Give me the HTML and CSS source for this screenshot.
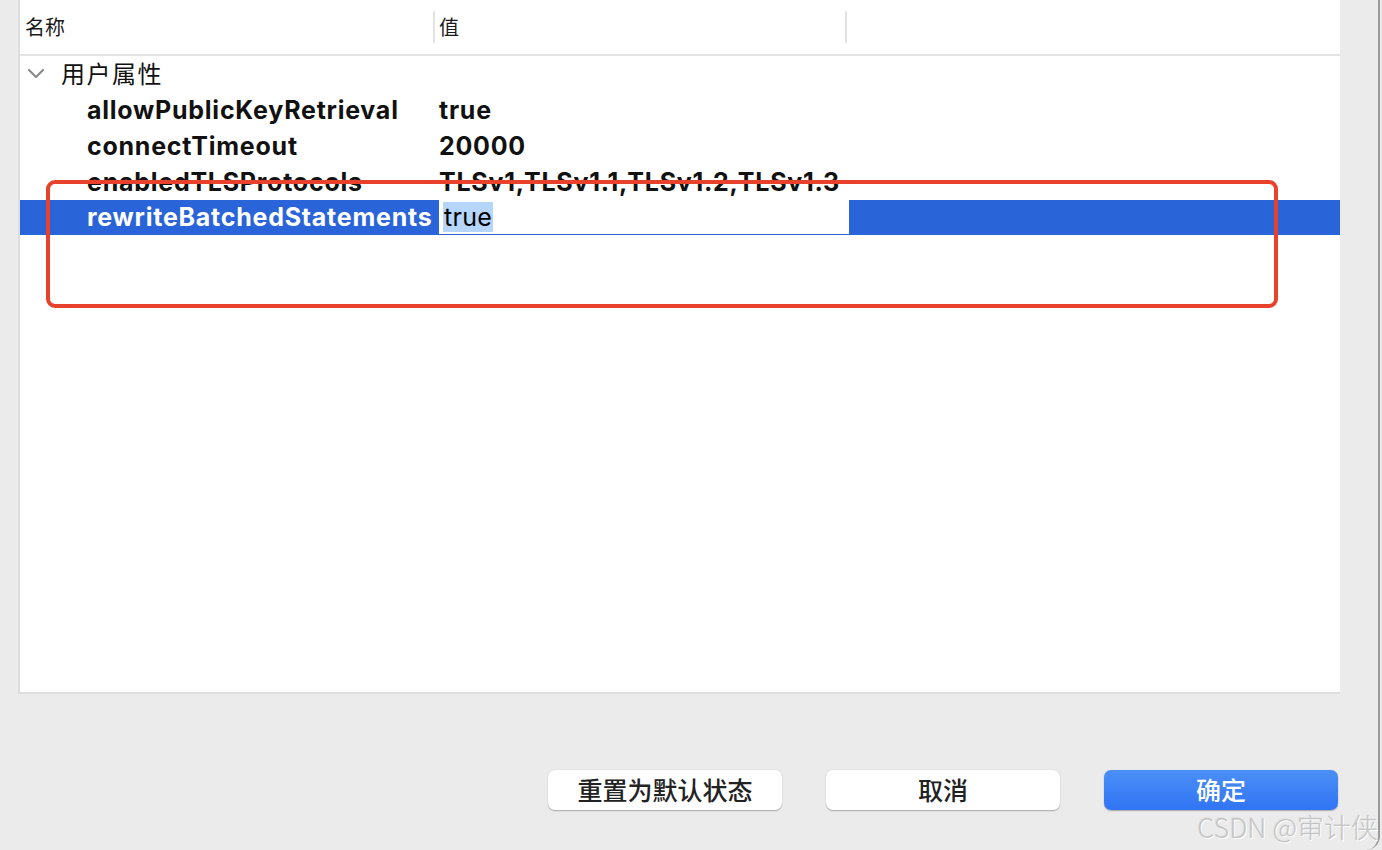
FILE: index.html
```html
<!DOCTYPE html>
<html lang="zh-CN">
<head>
<meta charset="utf-8">
<title>属性</title>
<link rel="stylesheet" href="styles.css">
</head>
<body>
<div class="window">
  <div class="panel">
    <div class="header">
      <div class="hcell name-col">名称</div>
      <div class="hcell value-col">值</div>
      <div class="hcell rest-col"></div>
    </div>
    <div class="rows">
      <div class="row group">
        <svg class="chev" width="18" height="12" viewBox="0 0 18 12"><path d="M2 2 L9 9 L16 2" fill="none" stroke="#8a8a8a" stroke-width="2.2" stroke-linecap="round" stroke-linejoin="round"/></svg>
        <span class="group-label">用户属性</span>
      </div>
      <div class="row prop">
        <div class="pname">allowPublicKeyRetrieval</div>
        <div class="pvalue">true</div>
      </div>
      <div class="row prop">
        <div class="pname">connectTimeout</div>
        <div class="pvalue">20000</div>
      </div>
      <div class="row prop">
        <div class="pname">enabledTLSProtocols</div>
        <div class="pvalue">TLSv1,TLSv1.1,TLSv1.2,TLSv1.3</div>
      </div>
      <div class="row prop selected">
        <div class="pname">rewriteBatchedStatements</div>
        <div class="editor"><span class="sel">true</span></div>
      </div>
    </div>
    <div class="highlight-box"></div>
  </div>
  <div class="footer">
    <button class="btn">重置为默认状态</button>
    <button class="btn">取消</button>
    <button class="btn primary">确定</button>
  </div>
  <div class="watermark">CSDN @审计侠</div>
</div>
</body>
</html>
```

FILE: styles.css
```css
html, body {
  margin: 0;
  padding: 0;
  background: #ebebeb;
}
body {
  width: 1382px;
  height: 850px;
  overflow: hidden;
  font-family: "Inter", "Liberation Sans", "Noto Sans CJK SC", sans-serif;
  color: #111;
}
.window {
  position: relative;
  width: 1380px;
  height: 850px;
  border-right: 2px solid #9a9a9a;
  border-bottom-right-radius: 14px;
  box-sizing: border-box;
  display: flex;
  flex-direction: column;
}
.panel {
  position: relative;
  margin-left: 18px;
  width: 1322px;
  height: 694px;
  box-sizing: border-box;
  background: #fff;
  border-left: 2px solid #dedede;
  border-bottom: 2px solid #dedede;
}
.header {
  display: flex;
  height: 54px;
  border-bottom: 2px solid #e3e3e3;
  align-items: center;
}
.hcell {
  font-family: "Noto Sans CJK SC", sans-serif;
  font-size: 20px;
  color: #1a1a1a;
  height: 32px;
  line-height: 32px;
  box-sizing: border-box;
}
.name-col {
  width: 415px;
  padding-left: 5px;
  border-right: 2px solid #e3e3e3;
}
.value-col {
  width: 412px;
  padding-left: 4px;
  border-right: 2px solid #e3e3e3;
}
.rest-col {
  flex: 1;
}
.rows {
  display: flex;
  flex-direction: column;
}
.row {
  height: 36px;
  display: flex;
  align-items: center;
}
.group .chev {
  margin-left: 7px;
  margin-right: 16px;
}
.group-label {
  font-family: "Noto Sans CJK SC", sans-serif;
  font-size: 24px;
  line-height: 32px;
  margin-top: -3px;
  color: #111;
  letter-spacing: 1.5px;
}
.prop .pname {
  width: 348px;
  padding-left: 67px;
  font-weight: 700;
  font-size: 25px;
  white-space: nowrap;
  overflow: hidden;
  letter-spacing: 0.75px;
}
.prop .pvalue {
  padding-left: 4px;
  font-weight: 700;
  font-size: 25px;
  white-space: nowrap;
  letter-spacing: 0.75px;
}
.selected {
  background: #2a64d9;
  height: 35px;
  margin-bottom: 1px;
  align-items: flex-start;
}
.selected .pname {
  color: #fff;
  width: 350px;
  line-height: 35px;
}
.editor {
  margin-left: 2px;
  width: 410px;
  height: 34px;
  background: #fff;
  display: flex;
  align-items: center;
  padding-left: 4px;
  box-sizing: border-box;
}
.sel {
  background: #b6d5fb;
  font-size: 25px;
  font-weight: 400;
  color: #000;
  padding: 0 1px;
  line-height: 30px;
  letter-spacing: 0.3px;
}
.highlight-box {
  position: absolute;
  left: 26px;
  top: 180px;
  width: 1232px;
  height: 128px;
  box-sizing: border-box;
  border: 4px solid #e8412c;
  border-radius: 9px;
}
.footer {
  display: flex;
  justify-content: flex-end;
  gap: 44px;
  padding-top: 76px;
  padding-right: 40px;
}
.btn {
  width: 234px;
  height: 40px;
  border: none;
  border-radius: 7px;
  background: #fff;
  box-shadow: 0 0.5px 1px rgba(0,0,0,0.18), 0 1px 2px rgba(0,0,0,0.12);
  font-family: "Noto Sans CJK SC", sans-serif;
  font-size: 25px;
  font-weight: 500;
  color: #222;
  padding: 0 0 3px 0;
  line-height: 36px;
}
.btn.primary {
  background: linear-gradient(#4b8ff7, #3174f4);
  color: #fff;
}
.watermark {
  position: absolute;
  right: 0;
  bottom: 4px;
  font-family: "Noto Sans CJK SC", sans-serif;
  font-size: 27px;
  font-weight: 300;
  color: #c4c4c4;
  text-shadow: 1px 1px 0 #fff, -1px -1px 0 rgba(0,0,0,0.05);
  white-space: nowrap;
}
```
